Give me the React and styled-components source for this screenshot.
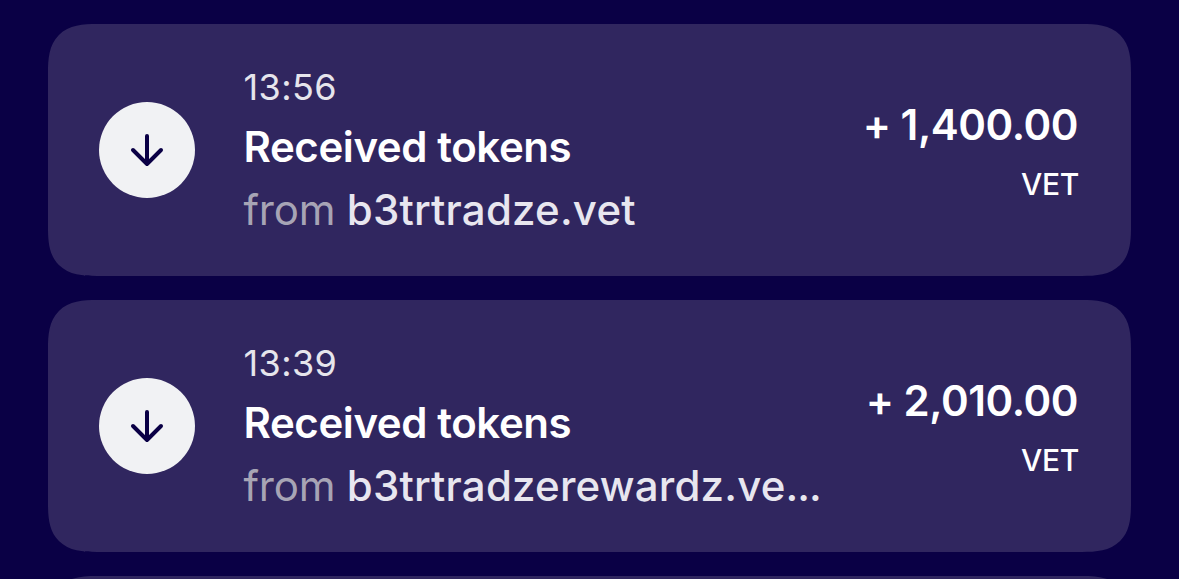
import React from "react";
import styled, { createGlobalStyle } from "styled-components";

const transactions = [
  {
    id: 1,
    time: "13:56",
    title: "Received tokens",
    sender: "b3trtradze.vet",
    amount: "+ 1,400.00",
    token: "VET",
  },
  {
    id: 2,
    time: "13:39",
    title: "Received tokens",
    sender: "b3trtradzerewardz.ve",
    truncated: true,
    amount: "+ 2,010.00",
    token: "VET",
  },
];

const App = () => {
  return (
    <>
      <GlobalStyle />
      <ActivityList>
        {transactions.map((tx) => (
          <Card key={tx.id}>
            <IconCircle>
              <ArrowIcon viewBox="0 0 34 34">
                <path d="M17 3V31M3 17L17 31L31 17" />
              </ArrowIcon>
            </IconCircle>
            <Details>
              <Time>{tx.time}</Time>
              <Title>{tx.title}</Title>
              <Sender>
                <span>from</span> {tx.sender}
                {tx.truncated && <Dots>...</Dots>}
              </Sender>
            </Details>
            <Value>
              <Amount>{tx.amount}</Amount>
              <Token>{tx.token}</Token>
            </Value>
          </Card>
        ))}
        {/* Next card, cut off by the bottom of the list */}
        <Card />
      </ActivityList>
    </>
  );
};

const GlobalStyle = createGlobalStyle`
  body {
    margin: 0;
    background: #0a0045;
    font-family: Inter, "Liberation Sans", sans-serif;
  }
`;

const ActivityList = styled.div`
  box-sizing: border-box;
  display: flex;
  flex-direction: column;
  gap: 24px;
  height: 579px;
  padding: 24px 48px 0;
  overflow: hidden;
`;

const Card = styled.div`
  box-sizing: border-box;
  display: flex;
  flex-shrink: 0;
  align-items: center;
  height: 252px;
  padding: 0 52px 0 51px;
  border-radius: 49px;
  corner-shape: superellipse(1.46);
  background: #30265f;
`;

const IconCircle = styled.div`
  display: flex;
  flex-shrink: 0;
  align-items: center;
  justify-content: center;
  width: 96px;
  height: 96px;
  margin-right: 48.5px;
  border-radius: 50%;
  background: #f1f2f4;
`;

const ArrowIcon = styled.svg`
  width: 34px;
  height: 34px;
  fill: none;
  stroke: #0a0045;
  stroke-width: 4;
  stroke-linecap: round;
  stroke-linejoin: round;
`;

const Details = styled.div`
  flex: 1;
  white-space: nowrap;
`;

const Time = styled.div`
  font-size: 36px;
  line-height: 44px;
  letter-spacing: 0.4px;
  color: #e6e5ec;
`;

const Title = styled.div`
  margin-top: 12px;
  font-size: 42px;
  font-weight: 600;
  line-height: 51px;
  letter-spacing: -0.42px;
  color: #ffffff;
`;

const Sender = styled.div`
  margin-top: 12px;
  font-size: 42px;
  font-weight: 500;
  line-height: 51px;
  letter-spacing: 0.2px;
  color: #e8e6ef;

  span:first-child {
    font-weight: 400;
    letter-spacing: -0.2px;
    color: #a7a4b5;
  }
`;

const Dots = styled.span`
  letter-spacing: -1.1px;
`;

const Value = styled.div`
  text-align: right;
  white-space: nowrap;
  color: #ffffff;
`;

const Amount = styled.div`
  margin-right: 1px;
  font-size: 42px;
  font-weight: 600;
  line-height: 51px;
  letter-spacing: -0.45px;
`;

const Token = styled.div`
  margin-top: 16px;
  font-size: 30px;
  font-weight: 500;
  line-height: 36px;
  letter-spacing: -0.3px;
`;

export default App;
